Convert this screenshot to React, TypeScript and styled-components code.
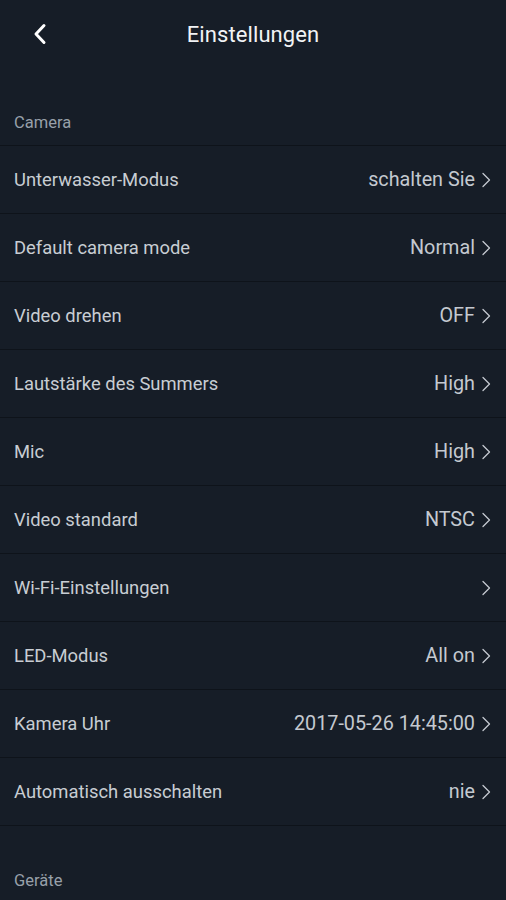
import styled, { createGlobalStyle } from 'styled-components';

const GlobalStyle = createGlobalStyle`
    html, body {
        margin: 0;
        padding: 0;
        background-color: #161d27;
    }
    body {
        font-family: Roboto, "Noto Sans", sans-serif;
        -webkit-font-smoothing: antialiased;
    }
`;

const Page = styled.div`
    width: 506px;
    height: 900px;
    overflow: hidden;
    background-color: #161d27;
`;

const Header = styled.div`
    position: relative;
    display: flex;
    align-items: center;
    justify-content: center;
    height: 68px;
`;

const BackButton = styled.button`
    position: absolute;
    left: 26px;
    top: 18px;
    width: 28px;
    height: 32px;
    padding: 0;
    border: none;
    background: none;
    display: flex;
    align-items: center;
    justify-content: center;
`;

const Title = styled.h1`
    margin: 0;
    color: #f1f3f5;
    font-size: 22px;
    font-weight: 400;
    letter-spacing: 0.1px;
`;

const SectionHeader = styled.div`
    display: flex;
    align-items: center;
    height: 78px;
    padding: 32px 14px 0;
    box-sizing: border-box;
    color: #98a0aa;
    font-size: 16.5px;
    border-bottom: 1px solid #0e131a;
`;

const Row = styled.div`
    display: flex;
    align-items: center;
    justify-content: space-between;
    height: 68px;
    padding: 0 14px 0 14px;
    box-sizing: border-box;
    border-bottom: 1px solid #0e131a;
`;

const Label = styled.span`
    color: #c8cdd3;
    font-size: 18.4px;
`;

const ValueWrap = styled.div`
    display: flex;
    align-items: center;
    gap: 6px;
`;

const Value = styled.span`
    color: #c4c9d0;
    font-size: 19.8px;
`;

const Chevron = () => (
    <svg width="11" height="16" viewBox="0 0 11 16" fill="none">
        <path d="M2 1.5 L8.5 8 L2 14.5" stroke="#c4c9d0" strokeWidth="1.3" strokeLinecap="round" strokeLinejoin="round" />
    </svg>
);

const rows: { label: string; value: string }[] = [
    { label: 'Unterwasser-Modus', value: 'schalten Sie' },
    { label: 'Default camera mode', value: 'Normal' },
    { label: 'Video drehen', value: 'OFF' },
    { label: 'Lautstärke des Summers', value: 'High' },
    { label: 'Mic', value: 'High' },
    { label: 'Video standard', value: 'NTSC' },
    { label: 'Wi-Fi-Einstellungen', value: '' },
    { label: 'LED-Modus', value: 'All on' },
    { label: 'Kamera Uhr', value: '2017-05-26 14:45:00' },
    { label: 'Automatisch ausschalten', value: 'nie' },
];

const App = () => {
    return (
        <>
            <GlobalStyle />
            <Page>
                <Header>
                    <BackButton aria-label="Zurück">
                        <svg width="16" height="22" viewBox="0 0 16 22" fill="none">
                            <path d="M12 2.5 L4 11 L12 19.5" stroke="#ffffff" strokeWidth="3" strokeLinecap="round" strokeLinejoin="round" />
                        </svg>
                    </BackButton>
                    <Title>Einstellungen</Title>
                </Header>
                <SectionHeader>Camera</SectionHeader>
                {rows.map((row) => (
                    <Row key={row.label}>
                        <Label>{row.label}</Label>
                        <ValueWrap>
                            {row.value && <Value>{row.value}</Value>}
                            <Chevron />
                        </ValueWrap>
                    </Row>
                ))}
                <SectionHeader>Geräte</SectionHeader>
            </Page>
        </>
    );
};

export default App;
